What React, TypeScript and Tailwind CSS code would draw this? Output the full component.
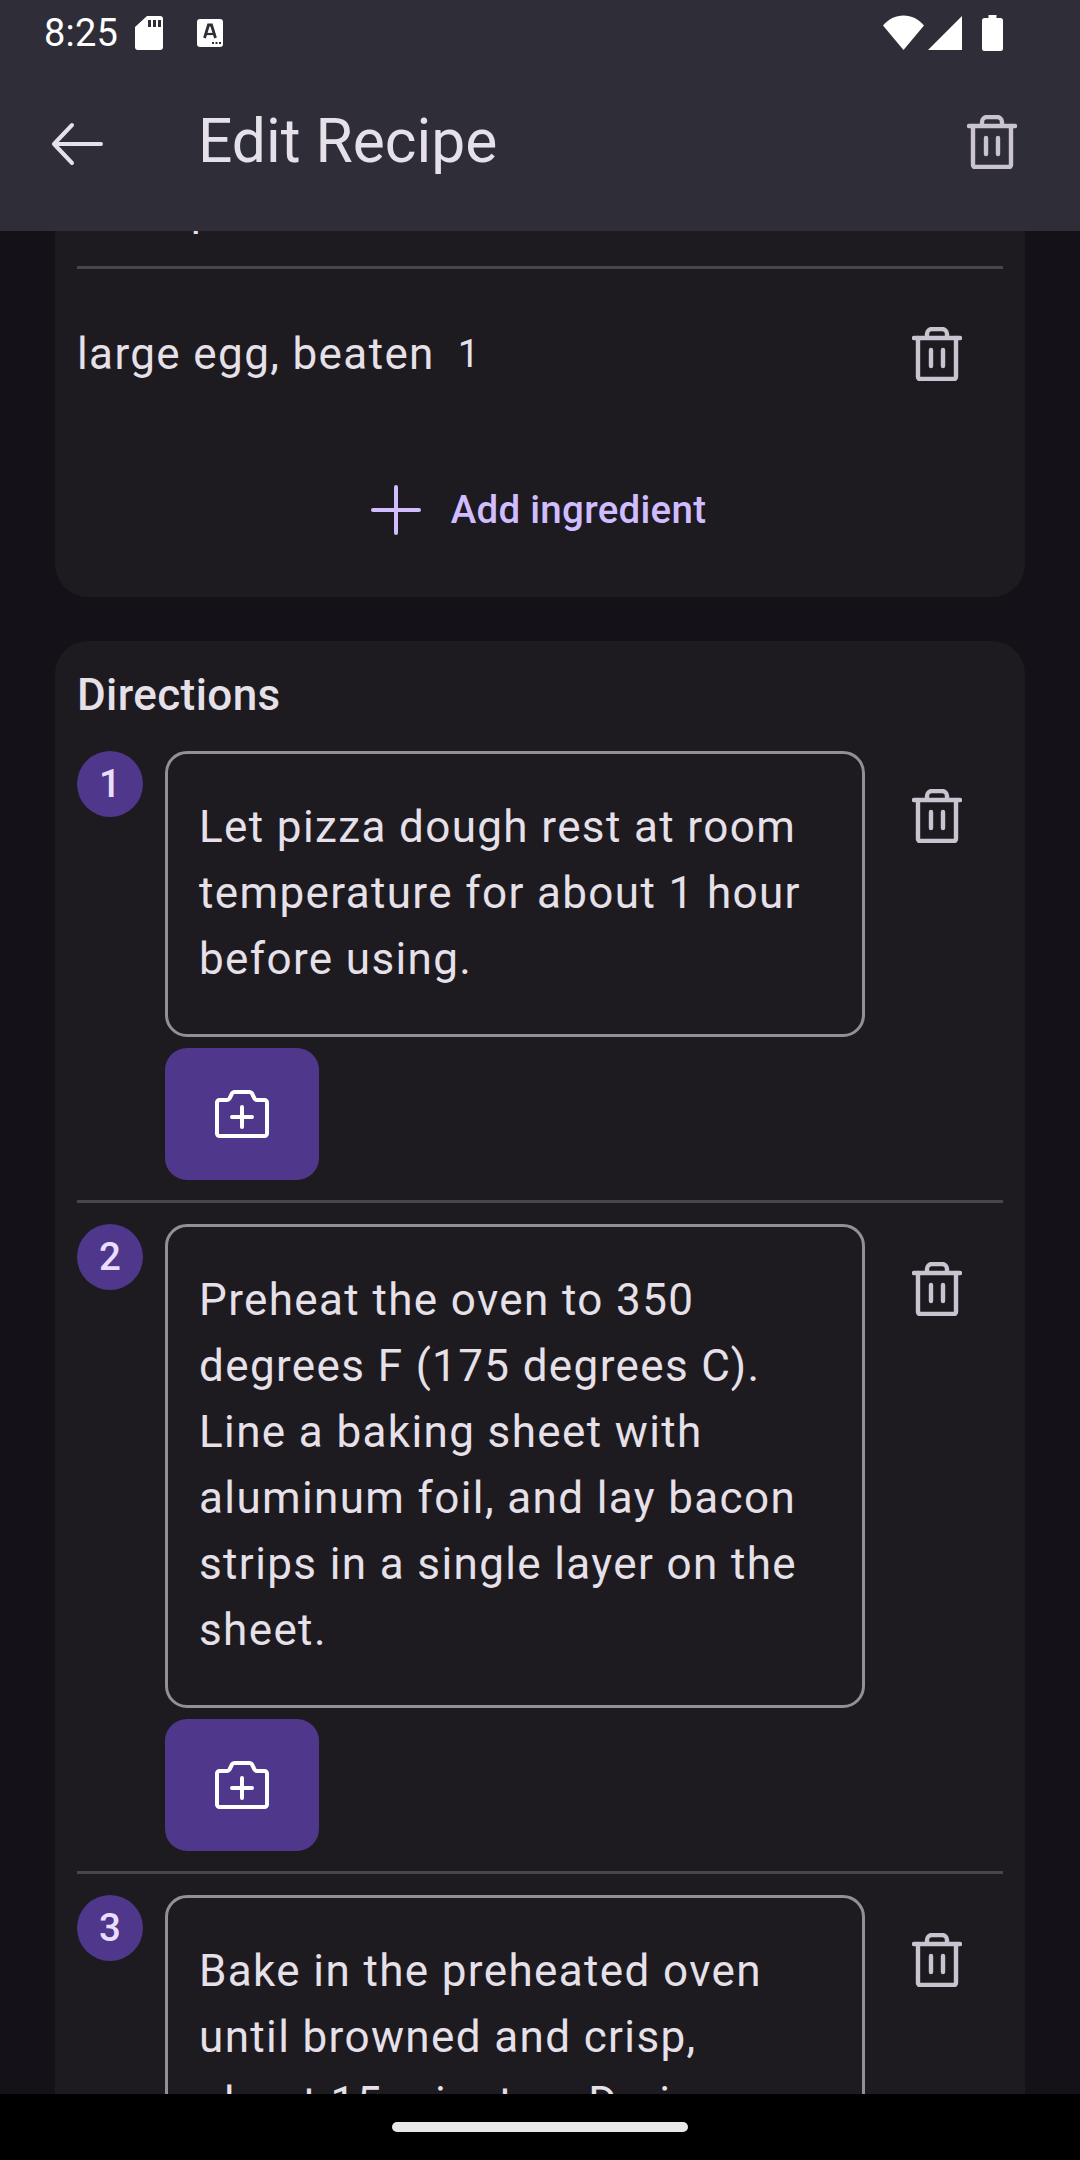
const Trash = ({ className }: { className?: string }) => (
  <svg viewBox="0 0 50 54" className={className} fill="none" stroke="#c9c4d0" strokeWidth="4.400" strokeLinecap="round" strokeLinejoin="round">
    <path d="M2 11H48" />
    <path d="M6 11v39a2 2 0 0 0 2 2h34a2 2 0 0 0 2-2V11" />
    <path d="M15 10V7a5 5 0 0 1 5-5h10a5 5 0 0 1 5 5v3" />
    <path d="M19 23v16M31 23v16" />
  </svg>
);

const CameraPlus = () => (
  <svg viewBox="0 0 54 48" className="w-[54px] h-[48px]" fill="none" stroke="#ffffff" strokeWidth="4" strokeLinecap="round" strokeLinejoin="round">
    <path d="M4.500 10H12a3 3 0 0 0 2.500-1.500l2-4A3.500 3.500 0 0 1 19.500 2h15a3.500 3.500 0 0 1 3 2.500l2 4A3 3 0 0 0 42 10h7.500a2.500 2.500 0 0 1 2.500 2.500v31a2.500 2.500 0 0 1-2.500 2.500h-45A2.500 2.500 0 0 1 2 43.500v-31A2.500 2.500 0 0 1 4.500 10z" />
    <path d="M27 17v20M17 27h20" />
  </svg>
);

const StatusBar = () => (
  <div className="h-[66px] flex items-center pl-[44px] pr-[77px] text-white">
    <span className="text-[38px] leading-none tracking-[0.2px]">8:25</span>
    <svg viewBox="0 0 28 34" className="w-[28px] h-[34px] ml-[17px]">
      <path fill="#fff" d="M12 0h13a3 3 0 0 1 3 3v28a3 3 0 0 1-3 3H3a3 3 0 0 1-3-3V11z" />
      <path fill="#2f2d38" d="M13 4h3v7h-3zM18 4h3v7h-3zM23 4h3v7h-3z" />
    </svg>
    <svg viewBox="0 0 26 28" className="w-[26px] h-[28px] ml-[34px]">
      <rect width="26" height="28" rx="3" fill="#fff" />
      <path d="M7.500 19l4-13h3l4 13" fill="none" stroke="#2f2d38" strokeWidth="2.800" />
      <path d="M9.500 15h7" stroke="#2f2d38" strokeWidth="2.200" />
      <path d="M15 24h2M18.500 24h2M22 24h2" stroke="#2f2d38" strokeWidth="2.200" />
    </svg>
    <div className="ml-auto flex items-center">
      <svg viewBox="0 0 41 36" className="w-[41px] h-[36px]">
        <path fill="#fff" d="M20.500 35L0 10.500C5.500 4 12.500 0.500 20.500 0.500S35.500 4 41 10.500z" />
      </svg>
      <svg viewBox="0 0 34 34" className="w-[34px] h-[34px] ml-[4px]">
        <path fill="#fff" d="M34 0v34H0z" />
      </svg>
      <svg viewBox="0 0 21 36" className="w-[21px] h-[36px] ml-[20px]">
        <path fill="#fff" d="M6.500 0h8v3h4a2.500 2.500 0 0 1 2.500 2.500v28a2.500 2.500 0 0 1-2.500 2.500h-16A2.500 2.500 0 0 1 0 33.500v-28A2.500 2.500 0 0 1 2.500 3h4z" />
      </svg>
    </div>
  </div>
);

const Step = ({ n, text, h, last }: { n: number; text: string; h: string; last?: boolean }) => (
  <div className={`flex ${last ? "" : "border-b-[3px] border-[#49454f] pb-[20px] mb-[21px]"}`}>
    <div className="w-[66px] h-[66px] shrink-0 rounded-full bg-[#4f378b] flex items-center justify-center text-[#eaddff] text-[38.500px] font-medium leading-none">
      {n}
    </div>
    <div className="ml-[22px] w-[700px] shrink-0">
      <div className={`${h} rounded-[22px] border-[3px] border-[#938f99] pl-[31px] pr-[44px] pt-[40px] text-[44px] leading-[66px] tracking-[1.375px] text-[#e6e0e9] overflow-hidden`}>
        {text}
      </div>
      {!last && (
        <div className="mt-[11px] w-[154px] h-[132px] rounded-[22px] bg-[#4f378b] flex items-center justify-center">
          <CameraPlus />
        </div>
      )}
    </div>
    <div className="flex-1 flex justify-end pt-[38px] pr-[41px]">
      <Trash className="w-[50px] h-[54px]" />
    </div>
  </div>
);

export default function App() {
  return (
    <div className="w-[1080px] h-[2160px] flex flex-col overflow-hidden bg-[#141218]" style={{ fontFamily: "Roboto, sans-serif" }}>
      <header className="h-[231px] shrink-0 bg-[#2f2d38] z-10">
        <StatusBar />
        <div className="h-[165px] flex items-center pb-[13px]">
          <svg viewBox="0 0 52 44" className="w-[52px] h-[44px] ml-[51px] mt-[3px]" fill="none" stroke="#e6e0e9" strokeWidth="4" strokeLinecap="round" strokeLinejoin="round">
            <path d="M50 22H3.500M21 3L3 22l18 19" />
          </svg>
          <h1 className="ml-[95px] text-[60.500px] leading-none text-[#e6e0e9]">Edit Recipe</h1>
          <Trash className="w-[50px] h-[54px] ml-auto mr-[63px]" />
        </div>
      </header>

      <main className="flex-1 min-h-0 overflow-hidden px-[55px]">
        <section className="rounded-b-[33px] bg-[#1d1b20] h-[366px] px-[22px]">
          <div className="h-[38px] border-b-[3px] border-[#49454f] overflow-hidden text-[44px] leading-[66px] tracking-[1.100px] text-[#e6e0e9]">
            <div className="-mt-[54px] -ml-[3px]">shrimp</div>
          </div>
          <div className="flex items-center h-[170px]">
            <span className="text-[44px] tracking-[1.375px] text-[#e6e0e9] leading-none">large egg, beaten</span>
            <span className="ml-[23px] text-[38.500px] tracking-[0.7px] text-[#e6e0e9] leading-none">1</span>
            <Trash className="w-[50px] h-[54px] ml-auto mr-[41px]" />
          </div>
          <div className="flex items-center justify-center h-[66px] mt-[38px] pr-[3px] text-[#d0bcff]">
            <svg viewBox="0 0 50 50" className="w-[50px] h-[50px]" fill="none" stroke="#d0bcff" strokeWidth="4" strokeLinecap="round">
              <path d="M25 2v46M2 25h46" />
            </svg>
            <span className="ml-[30px] text-[38.500px] font-medium tracking-[0.275px] leading-none">Add ingredient</span>
          </div>
        </section>

        <section className="mt-[44px] rounded-[33px] bg-[#1d1b20] px-[22px] pt-[29px]">
          <h2 className="text-[44px] leading-[50px] font-medium tracking-[0.4px] text-[#e6e0e9] mb-[31px]">Directions</h2>
          <Step n={1} h="h-[286px]" text="Let pizza dough rest at room temperature for about 1 hour before using." />
          <Step n={2} h="h-[484px]" text="Preheat the oven to 350 degrees F (175 degrees C). Line a baking sheet with aluminum foil, and lay bacon strips in a single layer on the sheet." />
          <Step n={3} h="h-[400px]" last text="Bake in the preheated oven until browned and crisp, about 15 minutes. Drain" />
        </section>
      </main>

      <div className="h-[66px] shrink-0 bg-black z-10 flex justify-center pt-[28px]">
        <div className="w-[296px] h-[10px] rounded-full bg-[#e8e8e8]" />
      </div>
    </div>
  );
}
